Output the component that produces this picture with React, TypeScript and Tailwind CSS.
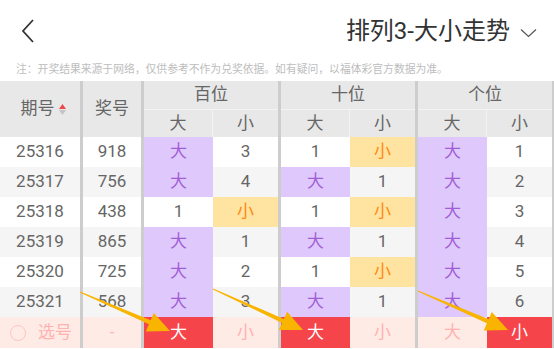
import React from "react";

type Cell = { t: string; k: "num" | "big" | "small" | "red" | "pink" };

const rows: { id: string; n: string; c: Cell[] }[] = [
  { id: "25316", n: "918", c: [{ t: "大", k: "big" }, { t: "3", k: "num" }, { t: "1", k: "num" }, { t: "小", k: "small" }, { t: "大", k: "big" }, { t: "1", k: "num" }] },
  { id: "25317", n: "756", c: [{ t: "大", k: "big" }, { t: "4", k: "num" }, { t: "大", k: "big" }, { t: "1", k: "num" }, { t: "大", k: "big" }, { t: "2", k: "num" }] },
  { id: "25318", n: "438", c: [{ t: "1", k: "num" }, { t: "小", k: "small" }, { t: "1", k: "num" }, { t: "小", k: "small" }, { t: "大", k: "big" }, { t: "3", k: "num" }] },
  { id: "25319", n: "865", c: [{ t: "大", k: "big" }, { t: "1", k: "num" }, { t: "大", k: "big" }, { t: "1", k: "num" }, { t: "大", k: "big" }, { t: "4", k: "num" }] },
  { id: "25320", n: "725", c: [{ t: "大", k: "big" }, { t: "2", k: "num" }, { t: "1", k: "num" }, { t: "小", k: "small" }, { t: "大", k: "big" }, { t: "5", k: "num" }] },
  { id: "25321", n: "568", c: [{ t: "大", k: "big" }, { t: "3", k: "num" }, { t: "大", k: "big" }, { t: "1", k: "num" }, { t: "大", k: "big" }, { t: "6", k: "num" }] },
];

const pick: Cell[] = [
  { t: "大", k: "red" }, { t: "小", k: "pink" },
  { t: "大", k: "red" }, { t: "小", k: "pink" },
  { t: "大", k: "pink" }, { t: "小", k: "red" },
];

function cls(k: Cell["k"]) {
  switch (k) {
    case "big":
      return "bg-[#dfc8fb] text-[#a15fd6]";
    case "small":
      return "bg-[#ffe3a0] text-[#ff8a12]";
    case "red":
      return "bg-[#f5454b] text-white";
    case "pink":
      return "text-[#ffb2b0]";
    default:
      return "text-[#666]";
  }
}

const Sep = () => <div className="w-[3px] shrink-0 self-stretch bg-[#cdcdcd]" />;

function DataCells({ c }: { c: Cell[] }) {
  return (
    <>
      {[0, 1, 2].map((g) => (
        <React.Fragment key={g}>
          <div className={`w-[69px] flex items-center justify-center ${cls(c[g * 2].k)}`}>{c[g * 2].t}</div>
          <div className={`w-[65px] flex items-center justify-center ${cls(c[g * 2 + 1].k)}`}>{c[g * 2 + 1].t}</div>
          {g < 2 ? <Sep /> : <div className="w-[2px] self-stretch bg-[#cdcdcd]" />}
        </React.Fragment>
      ))}
    </>
  );
}

function arrow(x1: number, y1: number, x2: number, y2: number) {
  const dx = x2 - x1, dy = y2 - y1;
  const L = Math.hypot(dx, dy);
  const ux = dx / L, uy = dy / L;
  const nx = -uy, ny = ux;
  const hl = 22, hw = 10, w0 = 0.6, w1 = 2.2;
  const bx = x2 - ux * hl, by = y2 - uy * hl;
  const p = [
    [x1 + nx * w0, y1 + ny * w0],
    [bx + nx * w1, by + ny * w1],
    [bx + nx * hw, by + ny * hw],
    [x2, y2],
    [bx - nx * hw, by - ny * hw],
    [bx - nx * w1, by - ny * w1],
    [x1 - nx * w0, y1 - ny * w0],
  ];
  return p.map((q) => q.map((v) => v.toFixed(1)).join(",")).join(" ");
}

export default function App() {
  const font = { fontFamily: 'Roboto, "Noto Sans CJK SC", sans-serif' };
  return (
    <div className="relative w-[554px] h-[349px] bg-white overflow-hidden" style={font}>
      <div className="h-[62px] flex items-center justify-between pl-[21px] pr-[17px]">
        <svg width="14" height="24" viewBox="0 0 14 24" fill="none">
          <path d="M12 1 L2 12 L12 23" stroke="#333" strokeWidth="1.8" />
        </svg>
        <div className="flex items-center gap-[10px]">
          <span className="text-[24px] leading-none text-[#333]">排列3-大小走势</span>
          <svg width="17" height="10" viewBox="0 0 17 10" fill="none" className="mt-[4px]">
            <path d="M1 1.5 L8.5 8.5 L16 1.5" stroke="#555" strokeWidth="1.2" />
          </svg>
        </div>
      </div>
      <div className="h-[19px] pl-[16px] text-[10.8px] leading-[16px] text-[#bdbdbd] whitespace-nowrap">
        注：开奖结果来源于网络，仅供参考不作为兑奖依据。如有疑问，以福体彩官方数据为准。
      </div>
      <div className="text-[17px]">
        <div className="flex h-[56px] bg-[#e8e8e8] text-[#666]">
          <div className="w-[80px] flex items-center justify-center gap-[4px] pl-[6px]">
            <span>期号</span>
            <span className="flex flex-col gap-[1px]">
              <svg width="7" height="5" viewBox="0 0 7 5"><path d="M0 5 L3.5 0 L7 5Z" fill="#f04848" /></svg>
              <svg width="7" height="5" viewBox="0 0 7 5"><path d="M0 0 L3.5 5 L7 0Z" fill="#c4c4c4" /></svg>
            </span>
          </div>
          <Sep />
          <div className="w-[58px] flex items-center justify-center">奖号</div>
          <Sep />
          {["百位", "十位", "个位"].map((h, i) => (
            <React.Fragment key={h}>
              <div className="w-[134px] flex flex-col">
                <div className="h-[29px] flex items-center justify-center border-b border-[#f3f3f3]">{h}</div>
                <div className="flex-1 flex">
                  <div className="w-[69px] flex items-center justify-center border-r border-[#f3f3f3]">大</div>
                  <div className="w-[65px] flex items-center justify-center">小</div>
                </div>
              </div>
              {i < 2 ? <Sep /> : <div className="w-[2px] bg-[#cdcdcd]" />}
            </React.Fragment>
          ))}
        </div>
        {rows.map((r, i) => (
          <div key={r.id} className={`flex h-[30px] ${i % 2 === 0 ? "bg-white" : "bg-[#f5f5f5]"}`}>
            <div className="w-[80px] flex items-center justify-center text-[#666]">{r.id}</div>
            <Sep />
            <div className="w-[58px] flex items-center justify-center text-[#666]">{r.n}</div>
            <Sep />
            <DataCells c={r.c} />
          </div>
        ))}
        <div className="flex h-[31px] bg-[#feebe6]">
          <div className="w-[80px] flex items-center pl-[10px] gap-[12px] text-[#ffb2b0]">
            <span className="w-[16px] h-[16px] rounded-full border border-[#ffc4c0]" />
            <span>选号</span>
          </div>
          <Sep />
          <div className="w-[58px] flex items-center justify-center text-[#ffb2b0]">-</div>
          <Sep />
          <DataCells c={pick} />
        </div>
      </div>
      <svg className="absolute inset-0 pointer-events-none" width="554" height="349">
        <polygon points={arrow(80, 292, 170, 331)} fill="#f9b400" />
        <polygon points={arrow(213, 289, 303, 330)} fill="#f9b400" />
        <polygon points={arrow(418, 291, 508, 330)} fill="#f9b400" />
      </svg>
    </div>
  );
}
